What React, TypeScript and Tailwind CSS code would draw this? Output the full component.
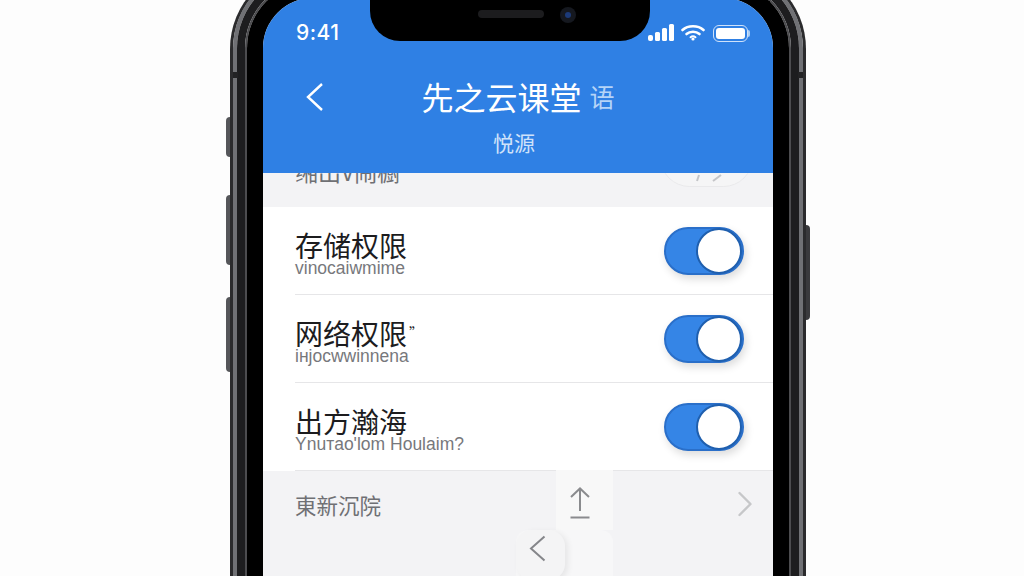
import { ChevronRight } from 'lucide-react';

const cjk = 'font-["Noto_Sans_CJK_SC",sans-serif]';

function Toggle() {
  return (
    <div className="flex h-12 w-20 shrink-0 items-center justify-end rounded-full border-2 border-[#2a6fc9] bg-[#3585e6] shadow-[2px_4px_8px_rgba(0,0,0,0.14)]">
      <div className="h-[46px] w-[46px] rounded-full border-2 border-[#1f5fae] bg-white" />
    </div>
  );
}

function PermissionRow({ title, sub, mark }: { title: string; sub: string; mark?: string }) {
  return (
    <div className="flex h-[88px] items-center justify-between border-b border-[#e6e6e8] pr-[29px]">
      <div className="flex flex-col pt-[5px]">
        <div className={`${cjk} text-[28px] leading-[30px] text-[#1c1c1e]`}>
          {title}
          {mark && <sup className="ml-0.5 text-[14px]">{mark}</sup>}
        </div>
        <div className="font-['Liberation_Sans',sans-serif] text-[17.5px] leading-[17px] text-[#77787c]">{sub}</div>
      </div>
      <Toggle />
    </div>
  );
}

function StatusIcons() {
  return (
    <div className="flex items-center gap-[6px]">
      <svg width="27" height="18" viewBox="0 0 27 18" fill="white">
        <rect x="0" y="11" width="5" height="6" rx="2" />
        <rect x="7" y="8" width="5" height="9" rx="1.5" />
        <rect x="14" y="4" width="5" height="13" rx="1.5" />
        <rect x="21" y="0" width="5" height="17" rx="1.5" />
      </svg>
      <svg width="24" height="18" viewBox="0 0 24 18" fill="none" stroke="white" strokeWidth="2.6" strokeLinecap="round">
        <path d="M1.5 6C7 1 17 1 22.5 6" />
        <path d="M5.5 10C9 7 15 7 18.5 10" />
        <circle cx="12" cy="15" r="1.6" fill="white" stroke="none" />
        <path d="M9.5 13.2C11 12 13 12 14.5 13.2" strokeWidth="2" />
      </svg>
      <div className="ml-0.5 flex items-center">
        <div className="flex h-[17px] w-[35px] items-center rounded-[6px] border border-[#cfe2fa] p-[2px]">
          <div className="h-full w-[29px] rounded-[3px] bg-white" />
        </div>
        <div className="h-[7px] w-[2px] rounded-r-sm bg-[#a9cdf5]" />
      </div>
    </div>
  );
}

export default function App() {
  return (
    <div className="relative flex h-[576px] w-[1024px] justify-center overflow-hidden bg-[#fdfdfd] pl-3">
      {/* side buttons */}
      <div className="absolute left-[226px] top-[117px] h-[40px] w-[5px] rounded-l-sm bg-[#55565a]" />
      <div className="absolute left-[226px] top-[195px] h-[70px] w-[5px] rounded-l-sm bg-[#55565a]" />
      <div className="absolute left-[226px] top-[297px] h-[75px] w-[5px] rounded-l-sm bg-[#55565a]" />
      <div className="absolute left-[805px] top-[225px] h-[95px] w-[5px] rounded-r-sm bg-[#3a3a3d]" />

      <div className="relative mt-[-35px] h-[720px] w-[576px] shrink-0 rounded-t-[84px] border-[3px] border-b-0 border-[#2b2b2d]">
        {/* antenna bands */}
        <div className="absolute left-0 top-[104px] z-10 h-[6px] w-[5px] bg-[#222224]" />
        <div className="absolute right-0 top-[104px] z-10 h-[6px] w-[5px] bg-[#222224]" />
        <div className="h-full rounded-t-[80px] border-[4px] border-b-0 border-[#707175]">
          <div className="h-full rounded-t-[76px] border-[8px] border-b-0 border-[#1d1d1f]">
            <div className="h-full rounded-t-[68px] border-[2px] border-b-0 border-[#4c4c4f]">
              <div className="h-full rounded-t-[66px] border-[16px] border-b-0 border-black bg-black">
                <div className="relative h-full overflow-hidden rounded-t-[50px] bg-[#f3f3f5]">
                  {/* notch */}
                  <div className="absolute left-[107px] top-0 flex h-[43px] w-[280px] items-start justify-center rounded-b-[30px] bg-black pl-[34px] pt-[12px]">
                    <div className="h-2 w-[66px] rounded-full bg-[#1c1c1e]" />
                    <div className="ml-4 mt-[-3px] flex h-4 w-4 items-center justify-center rounded-full bg-[#15181f]">
                      <div className="h-1.5 w-1.5 rounded-full bg-[#1c3a78]" />
                    </div>
                  </div>

                  {/* blue header */}
                  <div className="flex h-[175px] flex-col bg-[#2f80e4] text-white">
                    <div className="flex h-[53px] items-center justify-between pl-[33px] pr-[23px] pt-[17px]">
                      <span className="font-['Inter',sans-serif] text-[21px] font-medium leading-[26px] tracking-[0.5px]">9:41</span>
                      <StatusIcons />
                    </div>
                    <div className="relative mt-[14px] flex h-[62px] items-center justify-center">
                      <svg className="absolute left-[42px] top-[17px]" width="19" height="30" viewBox="0 0 19 30" fill="none" stroke="white" strokeWidth="2.4">
                        <path d="M17 2L3 15L17 28" />
                      </svg>
                      <span className={`${cjk} text-[32px] leading-[44px]`}>先之云课堂</span>
                      <span className={`${cjk} ml-2 text-[25px] leading-[44px] text-[#b5d4f7]`}>语</span>
                    </div>
                    <div className={`${cjk} pr-2 text-center text-[21px] leading-[30px] text-[#cfe2fa]`}>悦源</div>
                  </div>

                  {/* clipped section above the list */}
                  <div className="relative h-[34px] overflow-hidden pl-[32px]">
                    <div className={`${cjk} mt-[-17px] text-[23px] leading-[30px] text-[#6f7074]`}>缃出V闹橱</div>
                    <div className="absolute left-[397px] top-[-45px] flex h-[59px] w-[93px] items-end justify-center rounded-full border border-[#e9e9eb] bg-[#f5f5f6]">
                      <svg className="mb-[2px]" width="60" height="10" viewBox="0 0 60 10" fill="none" stroke="#c4c5c8" strokeWidth="2">
                        <path d="M22 1L20 7" />
                        <path d="M44 1L36 7" />
                      </svg>
                    </div>
                  </div>

                  {/* permission rows */}
                  <div className="bg-white pl-[32px]">
                    <PermissionRow title="存储权限" sub="vinocaiwmime" />
                    <PermissionRow title="网络权限" sub="iнjocwwinnena" mark="”" />
                    <PermissionRow title="出方瀚海" sub="Ynuтao'lom Houlaim?" />
                  </div>

                  {/* bottom row */}
                  <div className="flex h-[72px] items-center justify-between pl-[32px] pr-[6px]">
                    <span className={`${cjk} mb-[4px] text-[21.5px] text-[#6f7074]`}>東新沉院</span>
                    <ChevronRight className="mb-[6px] text-[#c6c7c9]" size={44} strokeWidth={1.3} />
                  </div>

                  {/* floating tiles */}
                  <div className="absolute left-[293px] top-[472px] flex h-[60px] w-[57px] items-center justify-center bg-[#f8f8f8] pr-[10px] pt-[5px]">
                    <svg width="22" height="32" viewBox="0 0 22 32" fill="none" stroke="#8a8b8e" strokeWidth="2">
                      <path d="M2 10L11 1.5L20 10" />
                      <path d="M11 2V24" />
                      <path d="M1.5 30.5H20.5" />
                    </svg>
                  </div>
                  <div className="absolute left-[253px] top-[532px] h-[70px] w-[97px] rounded-xl bg-[#f7f7f8]">
                    <div className="flex h-[50px] w-[49px] items-center justify-center rounded-2xl bg-[#f4f4f5] pb-[14px] pr-[6px] shadow-[3px_2px_6px_rgba(0,0,0,0.07)]">
                      <svg width="17" height="27" viewBox="0 0 17 27" fill="none" stroke="#85868a" strokeWidth="2">
                        <path d="M15.5 1.5L2 13.5L15.5 25.5" />
                      </svg>
                    </div>
                  </div>
                </div>
              </div>
            </div>
          </div>
        </div>
      </div>
    </div>
  );
}
